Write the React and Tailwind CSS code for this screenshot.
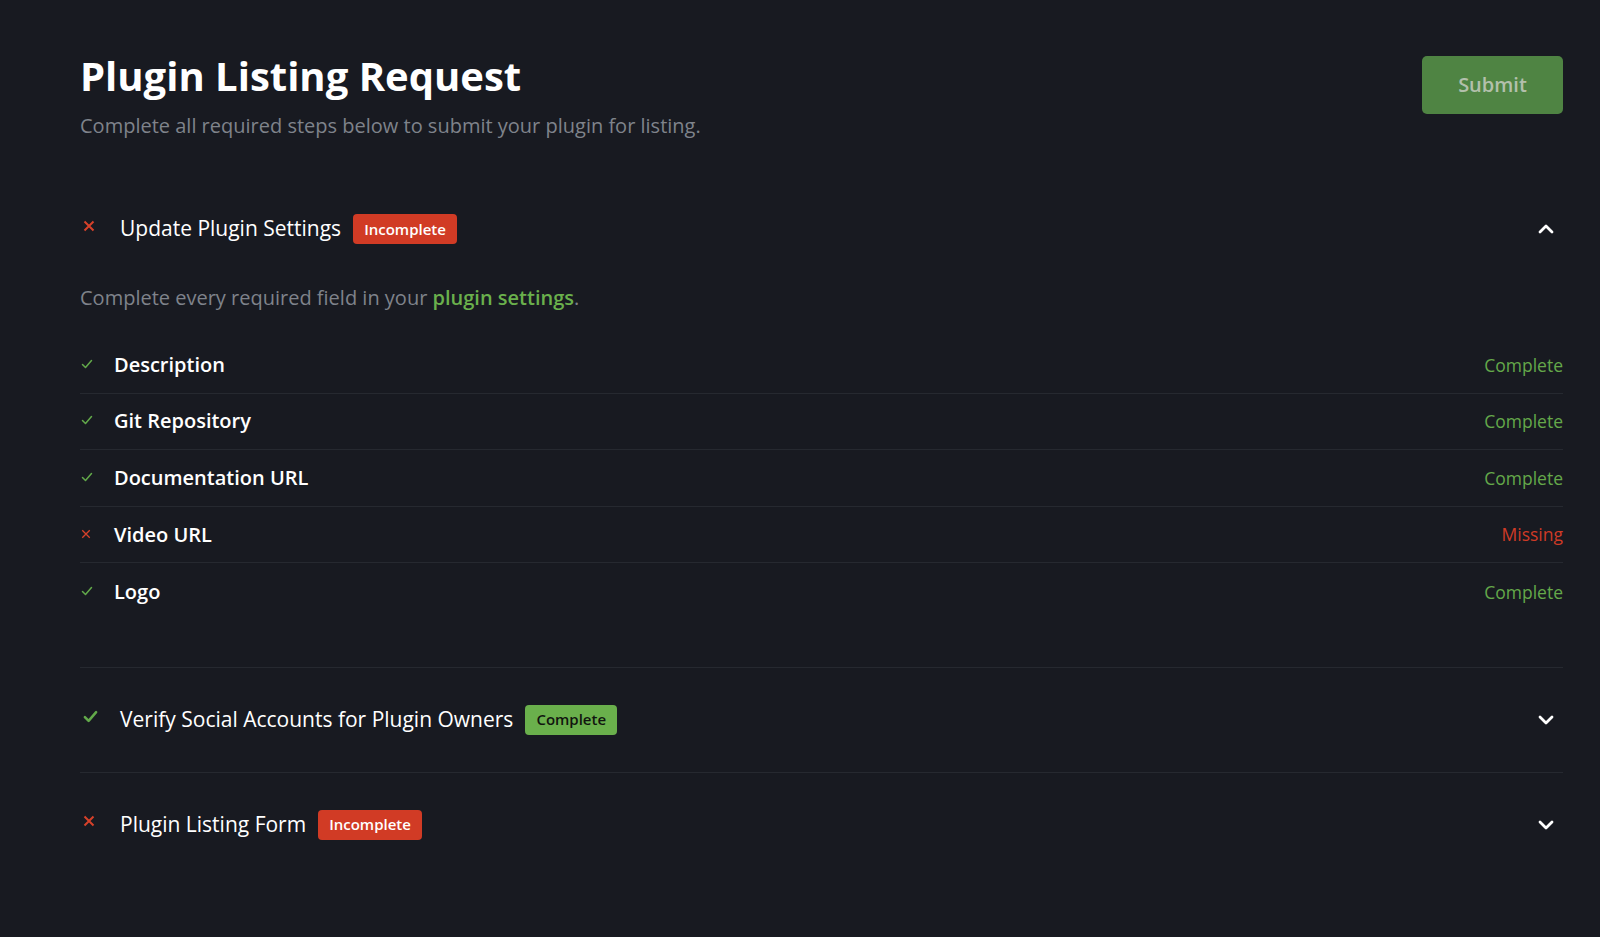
import React from "react";

const font = { fontFamily: '"Open Sans", "Noto Sans", sans-serif' };

function XIcon({ size = 12, stroke = 2 }) {
  return (
    <svg width={size} height={size} viewBox="0 0 12 12" fill="none" stroke="#d6412a" strokeWidth={stroke} strokeLinecap="butt">
      <path d="M1.5 1.5 L10.5 10.5 M10.5 1.5 L1.5 10.5" />
    </svg>
  );
}

function CheckIcon({ size = 12, stroke = 1.6 }) {
  return (
    <svg width={size} height={size} viewBox="0 0 12 12" fill="none" stroke="#62a94a" strokeWidth={stroke} strokeLinecap="round" strokeLinejoin="round">
      <path d="M1.5 6.5 L4.5 9.5 L10.5 2.5" />
    </svg>
  );
}

function Chevron({ up }) {
  return (
    <svg width="18" height="18" viewBox="0 0 18 18" fill="none" stroke="#ffffff" strokeWidth="2.8" strokeLinecap="round" strokeLinejoin="round">
      {up ? <path d="M3 12 L9 6 L15 12" /> : <path d="M3 6 L9 12 L15 6" />}
    </svg>
  );
}

function Badge({ ok }) {
  return ok ? (
    <span className="inline-flex items-center h-[30px] px-[11px] rounded-[4px] bg-[#6ab04c] text-[#11150f] text-[15px] font-semibold leading-none">
      Complete
    </span>
  ) : (
    <span className="inline-flex items-center h-[30px] px-[11px] rounded-[4px] bg-[#d13b25] text-white text-[15px] font-semibold leading-none">
      Incomplete
    </span>
  );
}

function SectionHeader({ ok, title, open }) {
  return (
    <div className="flex items-center h-[104px]">
      <div className="w-[40px] flex items-center pl-[3px] -mt-[7px]">
        {ok ? <CheckIcon size={15} stroke={2} /> : <XIcon size={12} stroke={2} />}
      </div>
      <span className="text-[21px] font-medium text-white mr-[12px]">{title}</span>
      <Badge ok={ok} />
      <div className="ml-auto mr-[8px] flex items-center">
        <Chevron up={open} />
      </div>
    </div>
  );
}

const rows = [
  { name: "Description", ok: true },
  { name: "Git Repository", ok: true },
  { name: "Documentation URL", ok: true },
  { name: "Video URL", ok: false },
  { name: "Logo", ok: true },
];

export default function App() {
  return (
    <div className="min-h-[937px] bg-[#181a21] pl-20 pr-[37px] pt-[56px]" style={font}>
      <div className="flex items-start justify-between">
        <div>
          <h1 className="text-[40px] leading-[40px] font-bold text-white">Plugin Listing Request</h1>
          <p className="mt-[16px] text-[20px] leading-[28px] text-[#7f838b]">
            Complete all required steps below to submit your plugin for listing.
          </p>
        </div>
        <button className="w-[141px] h-[58px] rounded-[5px] bg-[#4f8443] text-[#b3c0ac] text-[20px] font-semibold">
          Submit
        </button>
      </div>

      <div className="mt-[37px]">
        <div className="border-b border-[#262930]">
          <SectionHeader ok={false} title="Update Plugin Settings" open />
          <div className="pb-[47px]">
            <p className="text-[20px] leading-[28px] text-[#7f838b] mt-[3px]">
              Complete every required field in your{" "}
              <span className="text-[#6ab04c] font-semibold">plugin settings</span>.
            </p>
            <div className="mt-[25px]">
              {rows.map((r, i) => (
                <div
                  key={r.name}
                  className={
                    "flex items-center h-[56.6px] " + (i < rows.length - 1 ? "border-b border-[#262930]" : "")
                  }
                >
                  <div className="w-[34px] flex items-center pl-[1px] -mt-[2px]">
                    {r.ok ? <CheckIcon size={12} stroke={1.5} /> : <XIcon size={10} stroke={1.6} />}
                  </div>
                  <span className="text-[20px] font-semibold text-white">{r.name}</span>
                  <span className={"ml-auto text-[17.5px] " + (r.ok ? "text-[#64a84a]" : "text-[#cf3b26]")}>
                    {r.ok ? "Complete" : "Missing"}
                  </span>
                </div>
              ))}
            </div>
          </div>
        </div>
        <div className="border-b border-[#262930]">
          <SectionHeader ok title="Verify Social Accounts for Plugin Owners" />
        </div>
        <div>
          <SectionHeader ok={false} title="Plugin Listing Form" />
        </div>
      </div>
    </div>
  );
}
